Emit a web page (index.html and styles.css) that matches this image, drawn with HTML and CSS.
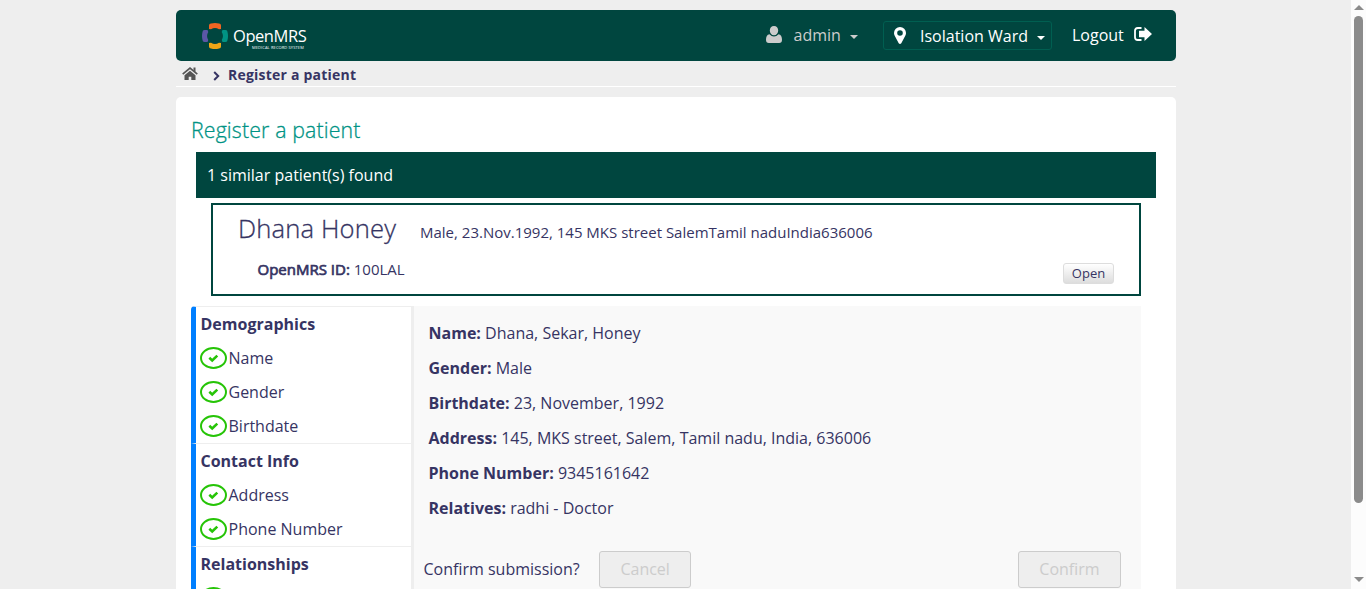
FILE: index.html
```html
<!DOCTYPE html>
<html lang="en">
<head>
<meta charset="utf-8">
<title>Register a patient</title>
<link rel="stylesheet" href="styles.css">
</head>
<body>
<svg class="defs" width="0" height="0">
  <symbol id="done" viewBox="0 0 27 22">
    <ellipse cx="13.5" cy="11" rx="12.5" ry="10" fill="none" stroke="#26c407" stroke-width="2"/>
    <path d="M9.300 10.800 12.200 13.400 17.300 8.600" fill="none" stroke="#26c407" stroke-width="2.600"/>
  </symbol>
</svg>
<div class="viewport">
  <div class="page">
    <header class="topbar">
      <div class="logo">
        <svg width="26" height="26" viewBox="0 0 26 26">
          <path d="M7 6V2.500Q7 .5 9 .5Q13 -.5 17 .5Q19 .5 19 2.500V6L17 6.300Q13 3.800 9 6.300Z" fill="#f26522"/>
          <path d="M7 20V23.500Q7 25.500 9 25.500Q13 26.500 17 25.500Q19 25.500 19 23.500V20L17 19.700Q13 22.200 9 19.700Z" fill="#eea616"/>
          <path d="M5.500 7H2.500Q.5 7 .5 9Q-.5 13 .5 17Q.5 19 2.500 19H5.500L6.300 17Q3.800 13 6.300 9Z" fill="#5b57a6"/>
          <path d="M20.500 7H23.500Q25.500 7 25.500 9Q26.500 13 25.500 17Q25.500 19 23.500 19H20.500L19.700 17Q22.200 13 19.700 9Z" fill="#009384"/>
        </svg>
        <div class="wordmark"><span class="brand">OpenMRS</span><span class="tagline">MEDICAL RECORD SYSTEM</span></div>
      </div>
      <div class="user">
        <svg width="16" height="17" viewBox="0 0 16 17"><path d="M8 0C10.600 0 12.200 1.900 12.200 4.500S10.600 9.300 8 9.300 3.800 7.100 3.800 4.500 5.400 0 8 0ZM3.500 8.200Q5.500 10.400 8 10.400T12.500 8.200C15 8.600 16 10.700 16 13.800 16 16 15 17 13.200 17H2.800C1 17 0 16 0 13.800 0 10.700 1 8.600 3.500 8.200Z" fill="#ccc"/></svg>
        <span class="user-name">admin</span><i class="caret"></i>
      </div>
      <div class="ward">
        <svg width="12" height="17" viewBox="0 0 12 17"><path fill-rule="evenodd" d="M6 0A6 6 0 0 1 12 6Q12 7.300 11.400 8.500L7.300 16.200Q6 17.700 4.700 16.200L.6 8.500Q0 7.300 0 6A6 6 0 0 1 6 0ZM6 3.200A2.800 2.800 0 1 0 6 8.800A2.800 2.800 0 1 0 6 3.200Z" fill="#fff"/></svg>
        <span class="ward-name">Isolation Ward</span><i class="caret"></i>
      </div>
      <div class="logout">
        <span>Logout</span>
        <svg width="18" height="14" viewBox="0 0 18 14"><path d="M7.500 1H3.800Q1 1 1 3.800V10.200Q1 13 3.800 13H7.500" fill="none" stroke="#fff" stroke-width="1.800"/><path d="M10.500 0 18 7 10.500 14V10.300H5V3.700H10.500Z" fill="#fff"/></svg>
      </div>
    </header>
    <nav class="crumbs">
      <svg class="home" width="16" height="14" viewBox="0 0 16 14"><path d="M8 3.700 13.500 8.300V13H9.300V9.800H6.700V13H2.500V8.300Z" fill="#555"/><path d="M.7 7.200 8 1.200 15.300 7.200" fill="none" stroke="#555" stroke-width="1.700"/><path d="M11.500 .5H13.500V5L11.500 3.300Z" fill="#555"/></svg>
      <svg class="chevron" width="7" height="10" viewBox="0 0 7 10"><path d="M1.200 1 5.200 5 1.200 9" fill="none" stroke="#363463" stroke-width="2"/></svg>
      <span>Register a patient</span>
    </nav>
    <main class="content">
      <h2 class="title">Register a patient</h2>
      <div class="similar">1 similar patient(s) found</div>
      <section class="match">
        <div class="match-head"><span class="match-name">Dhana Honey</span><span class="match-info">Male, 23.Nov.1992, 145 MKS street SalemTamil naduIndia636006</span></div>
        <div class="match-foot"><span class="match-id"><b>OpenMRS ID:</b> 100LAL</span><button class="open">Open</button></div>
      </section>
      <div class="wizard">
        <aside class="steps">
          <ul class="group">
            <li class="heading">Demographics</li>
            <li><svg class="tick"><use href="#done"/></svg>Name</li>
            <li><svg class="tick"><use href="#done"/></svg>Gender</li>
            <li><svg class="tick"><use href="#done"/></svg>Birthdate</li>
          </ul>
          <ul class="group">
            <li class="heading">Contact Info</li>
            <li><svg class="tick"><use href="#done"/></svg>Address</li>
            <li><svg class="tick"><use href="#done"/></svg>Phone Number</li>
          </ul>
          <ul class="group">
            <li class="heading">Relationships</li>
            <li><svg class="tick"><use href="#done"/></svg></li>
          </ul>
        </aside>
        <section class="summary">
          <div class="fields">
            <p><b>Name:</b> Dhana, Sekar, Honey</p>
            <p><b>Gender:</b> Male</p>
            <p><b>Birthdate:</b> 23, November, 1992</p>
            <p><b>Address:</b> 145, MKS street, Salem, Tamil nadu, India, 636006</p>
            <p><b>Phone Number:</b> 9345161642</p>
            <p><b>Relatives:</b> radhi - Doctor</p>
          </div>
          <div class="actions">
            <span>Confirm submission?</span>
            <button class="cancel" disabled>Cancel</button>
            <button class="confirm" disabled>Confirm</button>
          </div>
        </section>
      </div>
    </main>
  </div>
  <div class="scrollbar">
    <i class="arrow up"></i><i class="thumb"></i><i class="arrow down"></i>
  </div>
</div>
</body>
</html>
```

FILE: styles.css
```css
* { box-sizing: border-box; }
body { margin: 0; overflow: hidden; background: #eee; color: #363463; font: 400 16px/20px "Open Sans", sans-serif; }
svg { display: block; flex: none; }
b { font-weight: 700; }
.defs { position: absolute; }
.viewport { display: flex; height: 589px; overflow: hidden; }
.page { width: 1000px; margin: 10px 175px 0 176px; flex: none; }

.topbar { display: flex; height: 51px; background: #00463f; border-radius: 5px; color: #fff; }
.logo { display: flex; width: 563px; padding: 13px 0 0 26px; }
.wordmark { display: flex; flex-direction: column; margin: 3px 0 0 5px; }
.brand { font-size: 16.500px; line-height: 19px; letter-spacing: -0.450px; }
.tagline { width: 54px; height: 5px; margin: 0 0 0 19px; font-size: 4px; line-height: 5px; letter-spacing: 0.120px; white-space: nowrap; }
.caret { width: 0; height: 0; border: 4px solid transparent; border-top-color: currentColor; border-bottom: 0; }
.user { display: flex; width: 144px; padding: 16px 0 0 26px; color: #ccc; }
.user-name { margin: -1px 9px 0 12px; }
.user svg { margin-left: 0.500px; }
.user .caret { margin-top: 9px; }
.ward { display: flex; width: 169px; height: 29px; margin-top: 11px; padding: 5px 0 0 10px; border: 1px solid #005f51; border-radius: 3px; }
.ward-name { margin: -1px 9.500px 0 14px; }
.ward .caret { margin-top: 9px; }
.logout { display: flex; padding: 15px 0 0 20px; }
.logout svg { margin: 2px 0 0 10px; }

.crumbs { display: flex; height: 26px; padding: 3px 0 0 6px; border-bottom: 1px solid #fff; font-size: 14px; line-height: 22px; font-weight: 700; letter-spacing: 0.220px; }
.home { margin-top: 3px; }
.chevron { margin: 7px 8px 0 15px; }

.content { height: 700px; margin-top: 10px; padding: 19px 20px 0 15px; background: #fff; border-radius: 5px; }
.title { margin: 0 0 10px; color: #009384; font-size: 21.300px; line-height: 27px; height: 26px; font-weight: 300; letter-spacing: 0.150px; -webkit-text-stroke: 0.300px currentColor; }
.similar { height: 46px; margin-left: 5px; padding: 13px 11px; background: #00463f; color: #fff; }
.match { height: 93px; margin: 5px 15px 0 20px; padding: 0 25px; border: 2px solid #00463f; }
.match-head { display: flex; align-items: baseline; height: 47px; line-height: 47px; }
.match-name { width: 182px; font-size: 25.600px; font-weight: 300; letter-spacing: 0.150px; -webkit-text-stroke: 0.300px currentColor; }
.match-info { font-size: 15px; }
.match-foot { display: flex; justify-content: space-between; padding-left: 19.500px; }
.match-id { margin-top: 7px; font-size: 15px; }
.match-id b { font-weight: 400; -webkit-text-stroke: 0.700px currentColor; }
button { font: inherit; border-radius: 3px; padding: 0; }
.open { width: 51px; height: 21px; margin-top: 11px; border: 1px solid #ddd; background: linear-gradient(#fff, #ddd); color: #363463; font-size: 13px; line-height: 17px; }

.wizard { display: flex; margin: 10px 15px 0 0; height: 400px; }
.steps { width: 223px; border-right: 3px solid #eee; }
.group { margin: 0; padding: 0; list-style: none; border-left: 5px solid #007fff; border-top: 1px solid #eee; }
.group:first-child { border-top-left-radius: 4px; }
.group li { display: flex; align-items: center; height: 34px; padding-left: 4px; }
.group .heading { padding-left: 4.500px; font-weight: 700; }
.tick { width: 27px; height: 22px; margin-right: 1.500px; }
.summary { flex: 1; background: #f9f9f9; }
.fields { padding: 10px 15px 0 14.500px; }
.fields p { margin: 0; height: 35px; line-height: 35px; }
.actions { display: flex; align-items: center; margin-top: 25px; padding: 0 20px 0 9.500px; }
.actions span { margin-top: -2px; }
.actions button { height: 37px; padding-bottom: 2px; border: 1px solid #ccc; background: #eee; color: #ccc; }
.cancel { width: 92px; margin-left: 19.500px; }
.confirm { width: 103px; margin-left: auto; }

.scrollbar { display: flex; flex-direction: column; align-items: center; width: 15px; height: 589px; background: #fcfcfc; padding: 5px 0 7px; }
.thumb { flex: none; width: 9px; height: 487px; margin: 6px 0 auto; border-radius: 5px; background: #8b8b8b; }
.arrow { flex: none; width: 0; height: 0; border: 0 solid transparent; }
.up { border-width: 0 5px 5px; border-bottom-color: #8b8b8b; }
.down { border-width: 5px 5px 0; border-top-color: #8b8b8b; }
```
